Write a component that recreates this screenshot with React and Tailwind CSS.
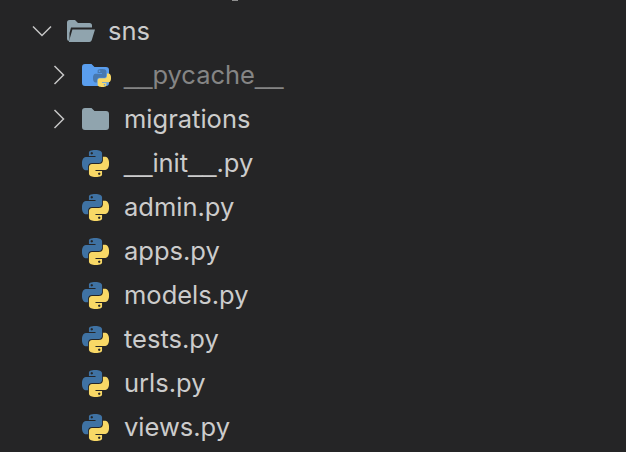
const PY_BLUE =
  "M14.25.18l.9.2.73.26.59.3.45.32.34.34.25.34.16.33.1.3.04.26.02.2-.01.13V8.5l-.05.63-.13.55-.21.46-.26.38-.3.31-.33.25-.35.19-.35.14-.33.1-.3.07-.26.04-.21.02H8.77l-.69.05-.59.14-.5.22-.41.27-.33.32-.27.35-.2.36-.15.37-.1.35-.07.32-.04.27-.02.21v3.06H3.17l-.21-.03-.28-.07-.32-.12-.35-.18-.36-.26-.36-.36-.35-.46-.32-.59-.28-.73-.21-.88-.14-1.05-.05-1.23.06-1.22.16-1.04.24-.87.32-.71.36-.57.4-.44.42-.33.42-.24.4-.16.36-.1.32-.05.24-.01h.16l.06.01h8.16v-.83H6.18l-.01-2.75-.02-.37.05-.34.11-.31.17-.28.25-.26.31-.23.38-.2.44-.18.51-.15.58-.12.64-.1.71-.06.77-.04.84-.02 1.27.05zm-6.3 1.98l-.23.33-.08.41.08.41.23.34.33.22.41.09.41-.09.33-.22.23-.34.08-.41-.08-.41-.23-.33-.33-.22-.41-.09-.41.09z";
const PY_YELLOW =
  "M21.04 6.11l.28.06.32.12.35.18.36.27.36.35.35.47.32.59.28.73.21.88.14 1.04.05 1.23-.06 1.23-.16 1.04-.24.86-.32.71-.36.57-.4.45-.42.33-.42.24-.4.16-.36.09-.32.05-.24.02-.16-.01h-8.22v.82h5.84l.01 2.76.02.36-.05.34-.11.31-.17.29-.25.25-.31.24-.38.2-.44.17-.51.15-.58.13-.64.09-.71.07-.77.04-.84.01-1.27-.04-1.07-.14-.9-.2-.73-.25-.59-.3-.45-.33-.34-.34-.25-.34-.16-.33-.1-.3-.04-.25-.02-.2.01-.13v-5.34l.05-.64.13-.54.21-.46.26-.38.3-.32.33-.24.35-.2.35-.14.33-.1.3-.06.26-.04.21-.02.13-.01h5.84l.69-.05.59-.14.5-.21.41-.28.33-.32.27-.35.2-.36.15-.36.1-.35.07-.32.04-.28.02-.21V6.07h2.09l.14.01zm-6.47 14.25l-.23.33-.08.41.08.41.23.33.33.23.41.08.41-.08.33-.23.23-.33.08-.41-.08-.41-.23-.33-.33-.23-.41-.08-.41.08z";

const FOLDER =
  "M0 3a3 3 0 0 1 3-3h6.5l3 3H24a3 3 0 0 1 3 3v13a3 3 0 0 1-3 3H3a3 3 0 0 1-3-3z";

const PythonIcon = ({ className, blue = "#3f72a3" }) => (
  <svg className={className} viewBox="0 0 24 24">
    <path fill={blue} fillRule="evenodd" d={PY_BLUE} />
    <path fill="#f8d866" fillRule="evenodd" d={PY_YELLOW} />
  </svg>
);

const Chevron = ({ open }) => (
  <svg
    className={open ? "w-[20px] h-[12px]" : "w-[12px] h-[20px]"}
    viewBox={open ? "0 0 20 12" : "0 0 12 20"}
    fill="none"
    stroke="#c5c5c5"
    strokeWidth="1.5"
  >
    <path d={open ? "M1 1.5l9 9 9-9" : "M1.5 1l9 9-9 9"} />
  </svg>
);

const FolderOpen = () => (
  <svg className="w-[28px] h-[22px]" viewBox="0 0 28 22">
    <path
      fill="#90a4ae"
      d="M0 2.5A2.5 2.5 0 0 1 2.5 0H8l3 3h11.5A2.5 2.5 0 0 1 25 5.5V7.5H4L2.5 13V21A2.5 2.5 0 0 1 0 18.5z"
    />
    <path fill="#90a4ae" d="M5.4 9.5H28L24.7 20.2a2.5 2.5 0 0 1-2.3 1.8H1.8z" />
  </svg>
);

const Folder = () => (
  <svg className="w-[27px] h-[22px]" viewBox="0 0 27 22">
    <path fill="#90a4ae" d={FOLDER} />
  </svg>
);

const PythonFolder = () => (
  <div className="relative w-[27px] h-[22px]">
    <svg className="w-[27px] h-[22px]" viewBox="0 0 27 22">
      <path fill="#5a9eee" d={FOLDER} />
    </svg>
    <PythonIcon
      className="absolute left-[11px] top-[5px] w-[18px] h-[18px]"
      blue="#4778b0"
    />
  </div>
);

// The reference font draws wider underscores than Inter does
const FileName = ({ name }) =>
  name.split(/(_+)/).map((part, idx) =>
    part.startsWith("_") ? (
      <span key={idx} className="font-['Liberation_Sans']">
        {part}
      </span>
    ) : (
      part
    )
  );

const FileRow = ({ name, icon, chevron, muted }) => (
  <div className="flex items-center h-[44px] pl-[53px]">
    <span className="w-[29px] flex items-center shrink-0">
      {chevron && <Chevron />}
    </span>
    <span className="w-[27px] flex items-center justify-center shrink-0">
      {icon}
    </span>
    <span
      className={`ml-[15px] text-[25.5px] leading-[44px] ${
        muted ? "text-[#858585]" : "text-[#cccccc]"
      }`}
    >
      <FileName name={name} />
    </span>
  </div>
);

const files = [
  "__init__.py",
  "admin.py",
  "apps.py",
  "models.py",
  "tests.py",
  "urls.py",
  "views.py",
];

export default function App() {
  return (
    <div className="relative w-[626px] h-[452px] overflow-hidden bg-[#252526] pt-[9px] font-['Inter',sans-serif]">
      {/* Clipped descender of the row scrolled off above */}
      <div className="absolute left-[232px] top-0 w-[6px] h-[1px] bg-[#8f8f8f]" />

      {/* Root folder */}
      <div className="flex items-center h-[44px] pl-[32px]">
        <span className="w-[35px] flex items-center shrink-0">
          <Chevron open />
        </span>
        <FolderOpen />
        <span className="ml-[13px] text-[25.5px] leading-[44px] text-[#cccccc]">
          sns
        </span>
      </div>

      <FileRow name="__pycache__" icon={<PythonFolder />} chevron muted />
      <FileRow name="migrations" icon={<Folder />} chevron />
      {files.map((name) => (
        <FileRow
          key={name}
          name={name}
          icon={<PythonIcon className="w-[27px] h-[27px]" />}
        />
      ))}
    </div>
  );
}
